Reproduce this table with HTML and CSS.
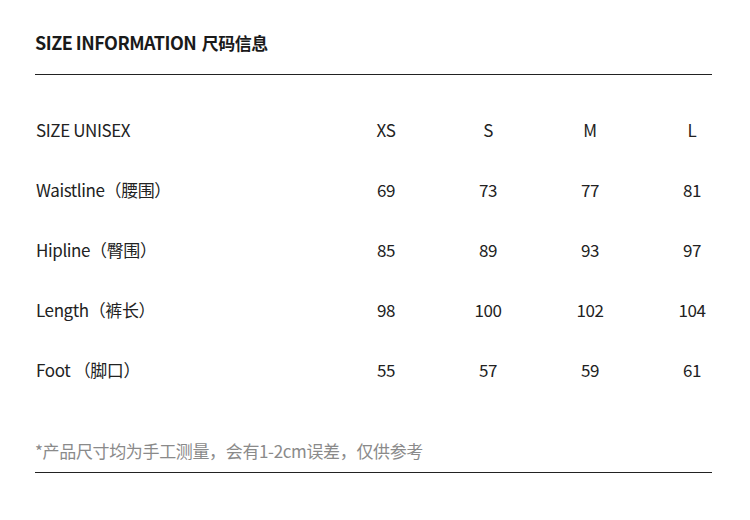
FILE: index.html
```html
<!DOCTYPE html>
<html>
<head>
<meta charset="utf-8">
<link rel="stylesheet" href="styles.css">
</head>
<body>
<div class="page">
  <h1 class="title">SIZE INFORMATION <span class="cn">尺码信息</span></h1>
  <div class="rule"></div>
  <div class="table">
    <div class="row">
      <div class="label">SIZE UNISEX</div><div class="cell">XS</div><div class="cell">S</div><div class="cell">M</div><div class="cell">L</div>
    </div>
    <div class="row">
      <div class="label">Waistline（腰围）</div><div class="cell">69</div><div class="cell">73</div><div class="cell">77</div><div class="cell">81</div>
    </div>
    <div class="row">
      <div class="label">Hipline（臀围）</div><div class="cell">85</div><div class="cell">89</div><div class="cell">93</div><div class="cell">97</div>
    </div>
    <div class="row">
      <div class="label">Length（裤长）</div><div class="cell">98</div><div class="cell">100</div><div class="cell">102</div><div class="cell">104</div>
    </div>
    <div class="row">
      <div class="label">Foot （脚口）</div><div class="cell">55</div><div class="cell">57</div><div class="cell">59</div><div class="cell">61</div>
    </div>
  </div>
  <p class="note">*产品尺寸均为手工测量，会有1-2cm误差，仅供参考</p>
  <div class="rule"></div>
</div>
</body>
</html>
```

FILE: styles.css
```css
html, body {
  margin: 0;
  padding: 0;
  background: #fff;
}
body {
  font-family: "Noto Sans CJK SC", "Noto Sans", sans-serif;
  color: #1a1a1a;
}
.page {
  padding: 0 38px 0 35px;
}
.title {
  margin: 0;
  padding: 30px 0 20px;
  height: 24px;
  font-size: 18px;
  line-height: 24px;
  font-weight: 700;
  letter-spacing: -0.5px;
}
.title .cn {
  margin-left: 2px;
  font-size: 17px;
  line-height: 20px;
}
.rule {
  height: 1px;
  background: #222;
}
.table {
  padding-top: 24px;
}
.row {
  display: grid;
  grid-template-columns: 300px repeat(4, 102px);
  height: 60px;
  align-items: center;
  font-size: 17px;
  font-weight: 400;
  letter-spacing: -0.4px;
  color: #222;
}
.label {
  padding-left: 1px;
}
.cell {
  text-align: center;
}
.note {
  margin: 0;
  padding: 42px 0 11px;
  font-size: 17px;
  line-height: 20px;
  font-weight: 400;
  color: #8a8a8a;
  letter-spacing: -0.35px;
}
```
